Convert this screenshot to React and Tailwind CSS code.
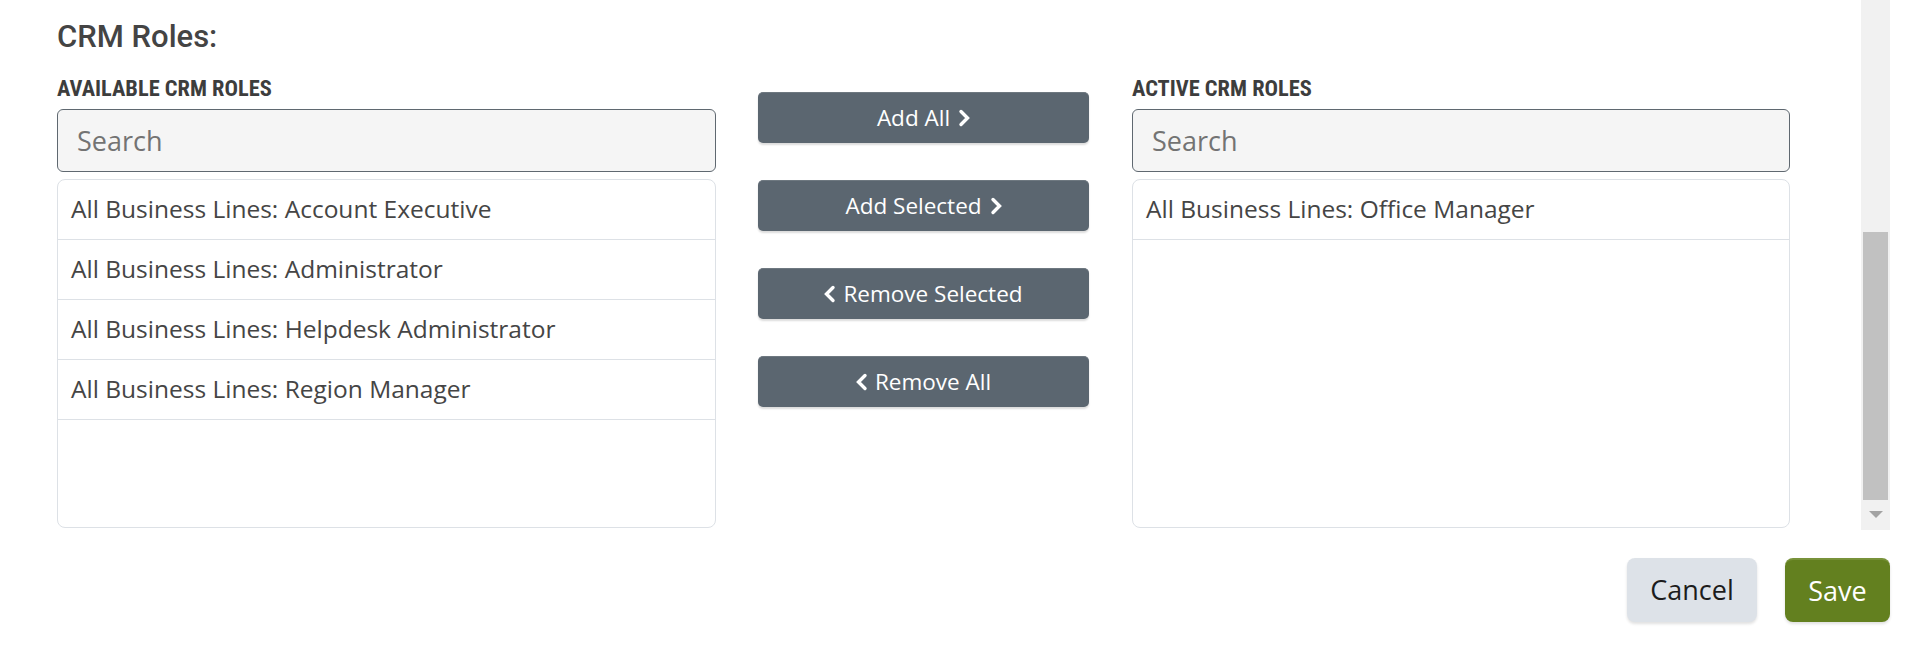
import React from "react";

const ChevronRight = () => (
  <svg width="12" height="18" viewBox="0 0 12 18" className="inline-block">
    <path d="M3 2.5 L9.5 9 L3 15.5" fill="none" stroke="white" strokeWidth="3.4" strokeLinecap="round" strokeLinejoin="miter" />
  </svg>
);

const ChevronLeft = () => (
  <svg width="12" height="18" viewBox="0 0 12 18" className="inline-block">
    <path d="M9 2.5 L2.5 9 L9 15.5" fill="none" stroke="white" strokeWidth="3.4" strokeLinecap="round" strokeLinejoin="miter" />
  </svg>
);

const Label = ({ children }) => (
  <div className="h-[26px] leading-[28px] mb-[9px] whitespace-nowrap">
    <span
      className="inline-block text-[22.4px] font-bold text-[#3d3d3d] uppercase"
      style={{ fontFamily: '"Roboto Condensed", Roboto, sans-serif' }}
    >
      {children}
    </span>
  </div>
);

const SearchBox = () => (
  <input
    type="text"
    placeholder="Search"
    className="block w-full h-[63px] rounded-[6px] border border-[#5f6870] bg-[#f5f5f5] pl-[19px] text-[27px] text-[#333] placeholder:text-[#737373] outline-none"
    style={{ fontFamily: '"Open Sans", sans-serif' }}
  />
);

const ListBox = ({ items }) => (
  <div className="mt-[7px] h-[349px] rounded-[8px] border border-[#dde1e6] bg-white overflow-hidden">
    {items.map((t) => (
      <div
        key={t}
        className="h-[60px] border-b border-[#dde1e6] pl-[13px] flex items-center text-[24.5px] text-[#454545]"
      >
        {t}
      </div>
    ))}
  </div>
);

const MoveButton = ({ children }) => (
  <button className="w-[331px] h-[51px] rounded-[5px] bg-[#5b6670] border-t border-[#6e7880] text-white text-[22.5px] flex items-center justify-center shadow-[0_2px_2px_rgba(0,0,0,0.14)]">
    {children}
  </button>
);

export default function App() {
  return (
    <div
      className="w-[1918px] h-[663px] bg-white overflow-hidden"
      style={{ fontFamily: '"Open Sans", sans-serif' }}
    >
      <div className="flex h-[530px]">
        <div className="flex-1 pl-[57px] pt-[18px]">
          <h2
            className="text-[31px] leading-[37px] font-medium text-[#444] mb-[19px]"
            style={{ fontFamily: "Roboto, sans-serif" }}
          >
            CRM Roles:
          </h2>
          <div className="flex">
            <div className="w-[659px]">
              <Label>Available CRM Roles</Label>
              <SearchBox />
              <ListBox
                items={[
                  "All Business Lines: Account Executive",
                  "All Business Lines: Administrator",
                  "All Business Lines: Helpdesk Administrator",
                  "All Business Lines: Region Manager",
                ]}
              />
            </div>
            <div className="ml-[42px] pt-[18px] flex flex-col gap-[37px]">
              <MoveButton>
                <span>Add All</span>
                <span className="ml-[8px] flex"><ChevronRight /></span>
              </MoveButton>
              <MoveButton>
                <span>Add Selected</span>
                <span className="ml-[8px] flex"><ChevronRight /></span>
              </MoveButton>
              <MoveButton>
                <span className="mr-[7px] flex"><ChevronLeft /></span>
                <span>Remove Selected</span>
              </MoveButton>
              <MoveButton>
                <span className="mr-[7px] flex"><ChevronLeft /></span>
                <span>Remove All</span>
              </MoveButton>
            </div>
            <div className="ml-[43px] w-[658px]">
              <Label>Active CRM Roles</Label>
              <SearchBox />
              <ListBox items={["All Business Lines: Office Manager"]} />
            </div>
          </div>
        </div>
        <div className="w-[29px] mr-[28px] bg-[#f1f1f1] flex flex-col">
          <div className="h-[232px]" />
          <div className="h-[268px] mx-[2px] bg-[#c1c1c1]" />
          <div className="flex-1 flex items-center justify-center">
            <svg width="14" height="8" viewBox="0 0 14 8">
              <path d="M0 0 L14 0 L7 7 Z" fill="#a3a3a3" />
            </svg>
          </div>
        </div>
      </div>
      <div className="flex justify-end gap-[28px] pr-[28px] pt-[28px]">
        <button className="w-[130px] h-[64px] rounded-[8px] bg-[#dde2e8] text-[27px] text-[#1c1c1c] shadow-[0_2px_3px_rgba(0,0,0,0.12)]">
          Cancel
        </button>
        <button className="w-[105px] h-[64px] rounded-[8px] bg-[#63801f] border-t-2 border-[#78923a] text-[27px] text-white shadow-[0_2px_3px_rgba(0,0,0,0.12)]">
          Save
        </button>
      </div>
    </div>
  );
}
